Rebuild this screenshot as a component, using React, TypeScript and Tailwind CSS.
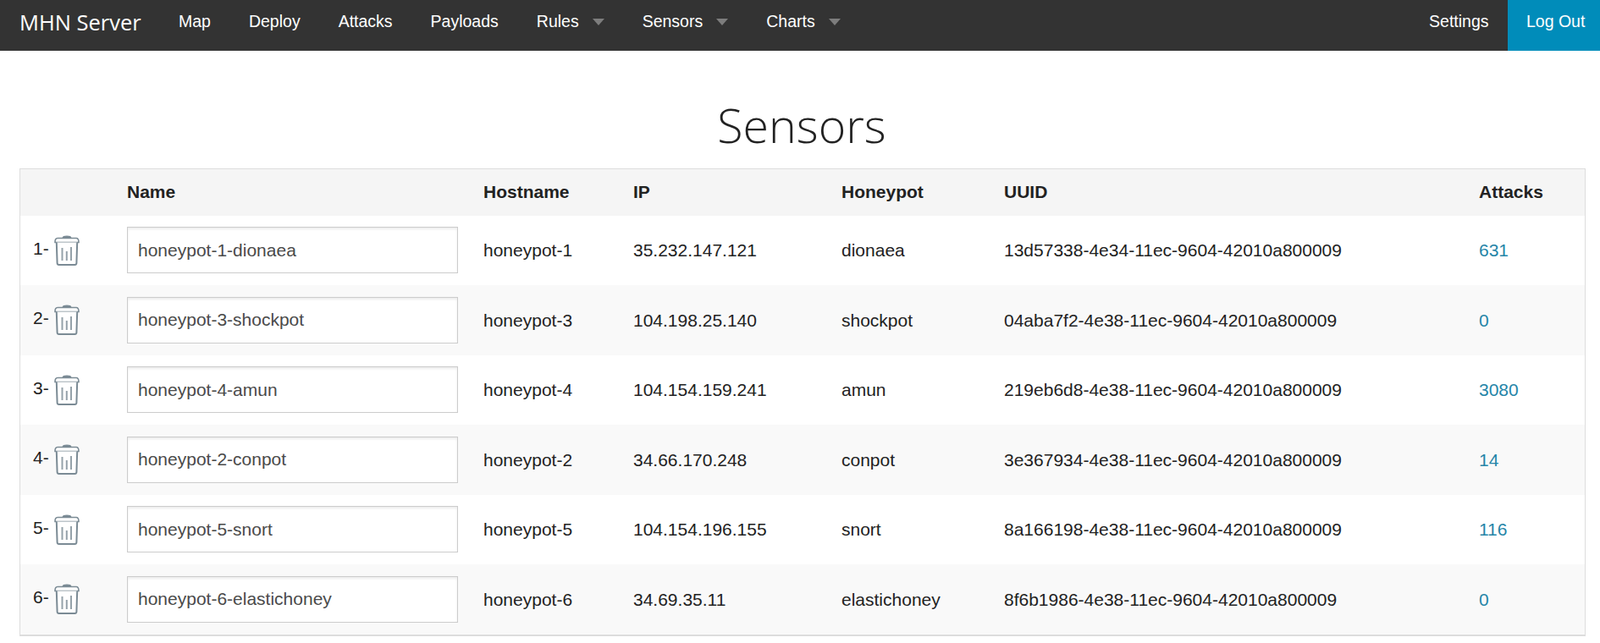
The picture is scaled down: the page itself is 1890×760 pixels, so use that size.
const rows = [
  ["honeypot-1-dionaea", "honeypot-1", "35.232.147.121", "dionaea", "13d57338-4e34-11ec-9604-42010a800009", "631"],
  ["honeypot-3-shockpot", "honeypot-3", "104.198.25.140", "shockpot", "04aba7f2-4e38-11ec-9604-42010a800009", "0"],
  ["honeypot-4-amun", "honeypot-4", "104.154.159.241", "amun", "219eb6d8-4e38-11ec-9604-42010a800009", "3080"],
  ["honeypot-2-conpot", "honeypot-2", "34.66.170.248", "conpot", "3e367934-4e38-11ec-9604-42010a800009", "14"],
  ["honeypot-5-snort", "honeypot-5", "104.154.196.155", "snort", "8a166198-4e38-11ec-9604-42010a800009", "116"],
  ["honeypot-6-elastichoney", "honeypot-6", "34.69.35.11", "elastichoney", "8f6b1986-4e38-11ec-9604-42010a800009", "0"],
];

function Trash() {
  return (
    <svg width="30" height="36" viewBox="0 0 30 36" fill="none" stroke="#7b8b95" className="block shrink-0">
      <path d="M10.5 3 C11 1 19 1 19.5 3" strokeWidth="2" fill="#7b8b95" />
      <path d="M1 8.5 C1 5 2 3.5 4 3.5 H26 C28 3.5 29 5 29 8.5 Z" strokeWidth="1.6" fill="#fff" />
      <path d="M2.8 8.5 L3.6 33 C3.7 34.4 4.4 35 5.6 35 H24.4 C25.6 35 26.3 34.4 26.4 33 L27.2 8.5" strokeWidth="2" fill="#fff" />
      <path d="M9.5 15 V30 M14.8 19 V30 M20 14 V30" strokeWidth="2" strokeOpacity="0.8" />
    </svg>
  );
}

function Caret() {
  return <span className="ml-[16px] mt-[1px] h-0 w-0 border-x-[7.5px] border-t-[8px] border-x-transparent border-t-[#7d7d7d]" />;
}

function NavItem({ label, caret }: { label: string; caret?: boolean }) {
  return (
    <a className="flex items-center px-[22.5px] pb-[9px]">
      {label}
      {caret && <Caret />}
    </a>
  );
}

export default function App() {
  return (
    <div className="min-h-[760px] bg-white font-['Liberation_Sans',Arial,sans-serif] text-[21px] text-[#222222]">
      <nav className="flex h-[60px] items-stretch bg-[#333333] text-[19.5px] text-white">
        <div className="flex w-[188.5px] items-center pb-[8px] pl-[23px] font-['Open_Sans',sans-serif] text-[25.5px]">MHN Server</div>
        <NavItem label="Map" />
        <NavItem label="Deploy" />
        <NavItem label="Attacks" />
        <NavItem label="Payloads" />
        <NavItem label="Rules" caret />
        <NavItem label="Sensors" caret />
        <NavItem label="Charts" caret />
        <div className="flex-1" />
        <a className="flex items-center px-[22.5px] pb-[9px]">Settings</a>
        <a className="flex w-[109px] items-center bg-[#008cba] pb-[9px] pl-[22px]">Log Out</a>
      </nav>

      <h1 className="pt-[48px] pb-[12px] pl-[4px] text-center font-['Open_Sans',sans-serif] text-[55.5px] leading-[79px] font-light text-[#222222]">Sensors</h1>

      <div className="mx-[23px] border-x-[1.5px] border-t-[1.5px] border-b-[2px] border-[#dddddd] w-[1850px]">
        <table className="w-full table-fixed border-collapse">
          <colgroup>
            <col className="w-[110px]" />
            <col className="w-[421px]" />
            <col className="w-[177px]" />
            <col className="w-[246px]" />
            <col className="w-[192px]" />
            <col className="w-[561px]" />
            <col />
          </colgroup>
          <thead>
            <tr className="h-[54.5px] bg-[#f5f5f5] text-left font-bold">
              <th />
              <th className="pb-[2px] pl-[16px] font-bold">Name</th>
              <th className="pb-[2px] pl-[16px] font-bold">Hostname</th>
              <th className="pb-[2px] pl-[16px] font-bold">IP</th>
              <th className="pb-[2px] pl-[16px] font-bold">Honeypot</th>
              <th className="pb-[2px] pl-[16px] font-bold">UUID</th>
              <th className="pb-[2px] pl-[16px] font-bold">Attacks</th>
            </tr>
          </thead>
          <tbody>
            {rows.map((r, i) => (
              <tr key={i} className={i % 2 === 1 ? "h-[82.5px] bg-[#f9f9f9]" : "h-[82.5px] bg-white"}>
                <td className="pl-[15px]">
                  <div className="flex items-center gap-[6px]">
                    <span className="-mt-[5px]">{i + 1}-</span>
                    <Trash />
                  </div>
                </td>
                <td className="pl-[16px]">
                  <input
                    readOnly
                    value={r[0]}
                    className="block h-[55px] w-[391px] border-[1.5px] border-[#cccccc] bg-white px-[12px] text-[21px] text-[#4a4a4a] shadow-[inset_0_2px_3px_rgba(0,0,0,0.08)] outline-none"
                  />
                </td>
                <td className="pl-[16px]">{r[1]}</td>
                <td className="pl-[16px]">{r[2]}</td>
                <td className="pl-[16px]">{r[3]}</td>
                <td className="pl-[16px]">{r[4]}</td>
                <td className="pl-[16px] text-[#2585a8]">{r[5]}</td>
              </tr>
            ))}
          </tbody>
        </table>
      </div>
    </div>
  );
}
